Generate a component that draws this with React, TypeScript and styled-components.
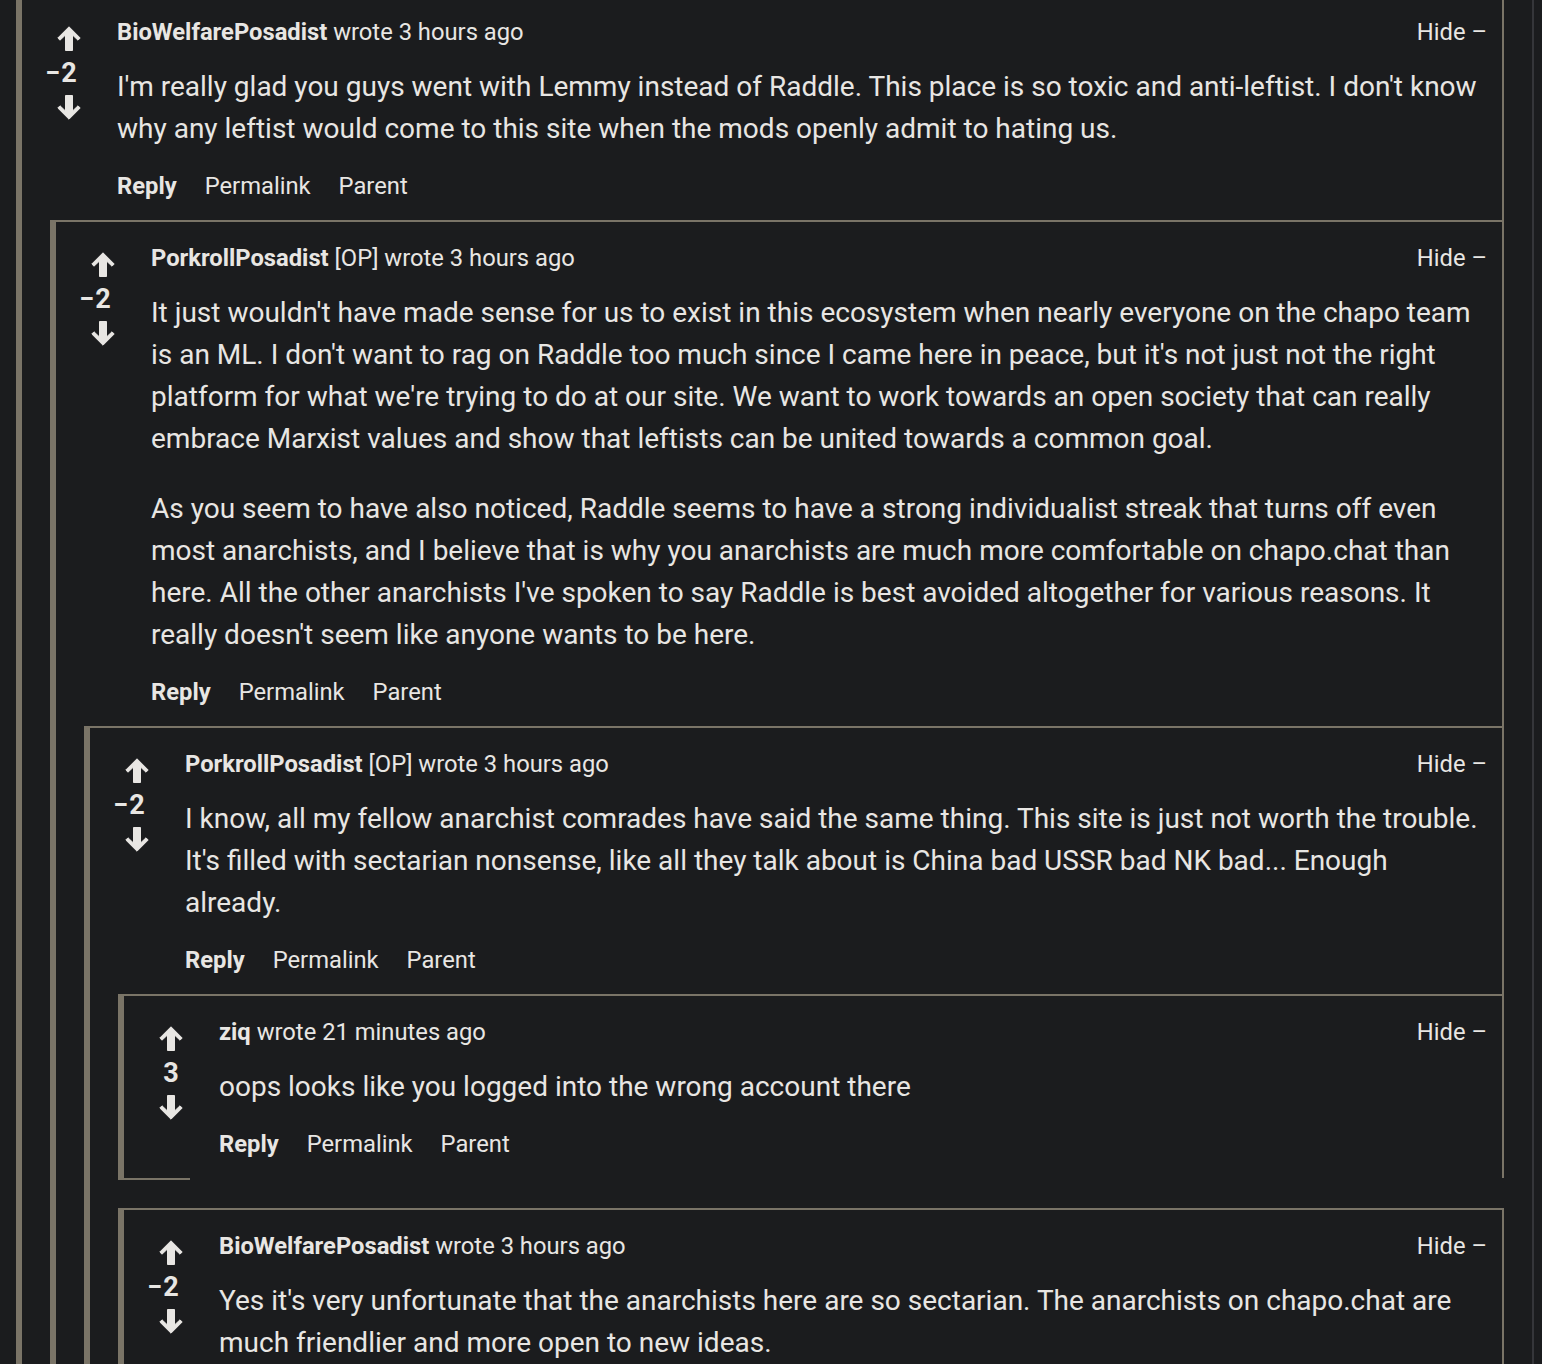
import React from 'react';
import styled, {createGlobalStyle} from 'styled-components';

type CommentType = {
    id: number
    author: string
    op?: boolean
    time: string
    score: number
    paragraphs: string[]
    children?: CommentType[]
}

const root: CommentType = {
    id: 1,
    author: 'BioWelfarePosadist',
    time: '3 hours ago',
    score: -2,
    paragraphs: [
        "I'm really glad you guys went with Lemmy instead of Raddle. This place is so toxic and anti-leftist. I don't know why any leftist would come to this site when the mods openly admit to hating us.",
    ],
    children: [
        {
            id: 2,
            author: 'PorkrollPosadist',
            op: true,
            time: '3 hours ago',
            score: -2,
            paragraphs: [
                "It just wouldn't have made sense for us to exist in this ecosystem when nearly everyone on the chapo team is an ML. I don't want to rag on Raddle too much since I came here in peace, but it's not just not the right platform for what we're trying to do at our site. We want to work towards an open society that can really embrace Marxist values and show that leftists can be united towards a common goal.",
                "As you seem to have also noticed, Raddle seems to have a strong individualist streak that turns off even most anarchists, and I believe that is why you anarchists are much more comfortable on chapo.chat than here. All the other anarchists I've spoken to say Raddle is best avoided altogether for various reasons. It really doesn't seem like anyone wants to be here.",
            ],
            children: [
                {
                    id: 3,
                    author: 'PorkrollPosadist',
                    op: true,
                    time: '3 hours ago',
                    score: -2,
                    paragraphs: [
                        "I know, all my fellow anarchist comrades have said the same thing. This site is just not worth the trouble. It's filled with sectarian nonsense, like all they talk about is China bad USSR bad NK bad... Enough already.",
                    ],
                    children: [
                        {
                            id: 4,
                            author: 'ziq',
                            time: '21 minutes ago',
                            score: 3,
                            paragraphs: ['oops looks like you logged into the wrong account there'],
                        },
                        {
                            id: 5,
                            author: 'BioWelfarePosadist',
                            time: '3 hours ago',
                            score: -2,
                            paragraphs: [
                                "Yes it's very unfortunate that the anarchists here are so sectarian. The anarchists on chapo.chat are much friendlier and more open to new ideas.",
                            ],
                            children: [],
                        },
                    ],
                },
            ],
        },
    ],
}

const colors = {
    bg: '#1b1c1e',
    text: '#e8e6e3',
    border: '#7a7467',
    edge: '#35363a',
}

const GlobalStyle = createGlobalStyle`
  * {
    box-sizing: border-box;
  }

  body {
    margin: 0;
    background-color: ${colors.bg};
    color: ${colors.text};
    font-family: Roboto, "Liberation Sans", sans-serif;
    overflow: hidden;
  }

  p {
    margin: 0;
  }
`

// chunky vote arrow, pointing up; flipped for the down vote
const Arrow = ({down}: { down?: boolean }) => (
    <ArrowSvg viewBox="0 0 24 25" width={24} height={25} $down={down}>
        <polygon
            points="12,0.8 23.2,12 21,14.2 15.5,9 15.5,24.5 8.5,24.5 8.5,9 3,14.2 0.8,12"
            fill="currentColor"
            stroke="currentColor"
            strokeWidth={1}
            strokeLinejoin="round"
        />
    </ArrowSvg>
)

const Comment = ({comment, nested}: { comment: CommentType, nested: boolean }) => {
    const {author, op, time, score, paragraphs, children} = comment
    const isLeaf = children === undefined
    return (
        <Thread $nested={nested}>
            <Body>
                <Votes>
                    <Arrow/>
                    <Score>
                        {score < 0 && <Sign>−</Sign>}
                        {Math.abs(score)}
                    </Score>
                    <Arrow down/>
                </Votes>
                <Content>
                    <Header>
                        <span>
                            <Author>{author}</Author>
                            {op && ' [OP]'} wrote {time}
                        </span>
                        <span>Hide –</span>
                    </Header>
                    <Text>
                        {paragraphs.map((p, i) => <p key={i}>{p}</p>)}
                    </Text>
                    <Actions>
                        <Action $strong>Reply</Action>
                        <Action>Permalink</Action>
                        <Action>Parent</Action>
                    </Actions>
                </Content>
            </Body>
            {children && children.length > 0 && (
                <Children>
                    {children.map(c => <Comment key={c.id} comment={c} nested/>)}
                </Children>
            )}
            {isLeaf && <EndCap/>}
        </Thread>
    )
}

export default function App() {
    return (
        <>
            <GlobalStyle/>
            <Page>
                <Comment comment={root} nested={false}/>
            </Page>
        </>
    )
}

const Page = styled.div`
  width: 1534px;
  min-height: 100vh;
  margin-top: -4px;
  padding: 0 28px 0 16px;
  border-right: 2px solid ${colors.edge};
`

const Thread = styled.div<{ $nested: boolean }>`
  border-left: 6px solid ${colors.border};
  border-top: ${props => props.$nested ? `2px solid ${colors.border}` : 'none'};
`

const Body = styled.div`
  display: grid;
  grid-template-columns: 95px 1fr;
  padding: 18px 15px 16px 0;
  border-right: 2px solid ${colors.border};
`

const Votes = styled.div`
  display: flex;
  flex-direction: column;
  align-items: center;
  margin-top: 12px;
  padding-right: 1px;
  color: ${colors.text};
`

const ArrowSvg = styled.svg<{ $down?: boolean }>`
  display: block;
  transform: ${props => props.$down ? 'rotate(180deg)' : 'none'};
`

const Score = styled.div`
  font-size: 27px;
  font-weight: 700;
  line-height: 44px;
`

const Sign = styled.span`
  display: inline-block;
  width: 16px;
  margin-left: -16px;
`

const Content = styled.div`
  min-width: 0;
`

const Header = styled.div`
  display: flex;
  justify-content: space-between;
  font-size: 23.75px;
  line-height: 36px;
`

const Author = styled.strong`
  font-weight: 700;
`

const Text = styled.div`
  margin-top: 16px;
  font-size: 28px;
  line-height: 42px;

  p + p {
    margin-top: 28px;
  }
`

const Actions = styled.div`
  display: flex;
  gap: 28px;
  margin-top: 18px;
  font-size: 23.75px;
  line-height: 36px;
`

const Action = styled.span<{ $strong?: boolean }>`
  font-weight: ${props => props.$strong ? 700 : 400};
`

const Children = styled.div`
  margin-left: 28px;

  & > * + * {
    margin-top: 28px;
  }
`

const EndCap = styled.div`
  width: 66px;
  height: 2px;
  background-color: ${colors.border};
`
